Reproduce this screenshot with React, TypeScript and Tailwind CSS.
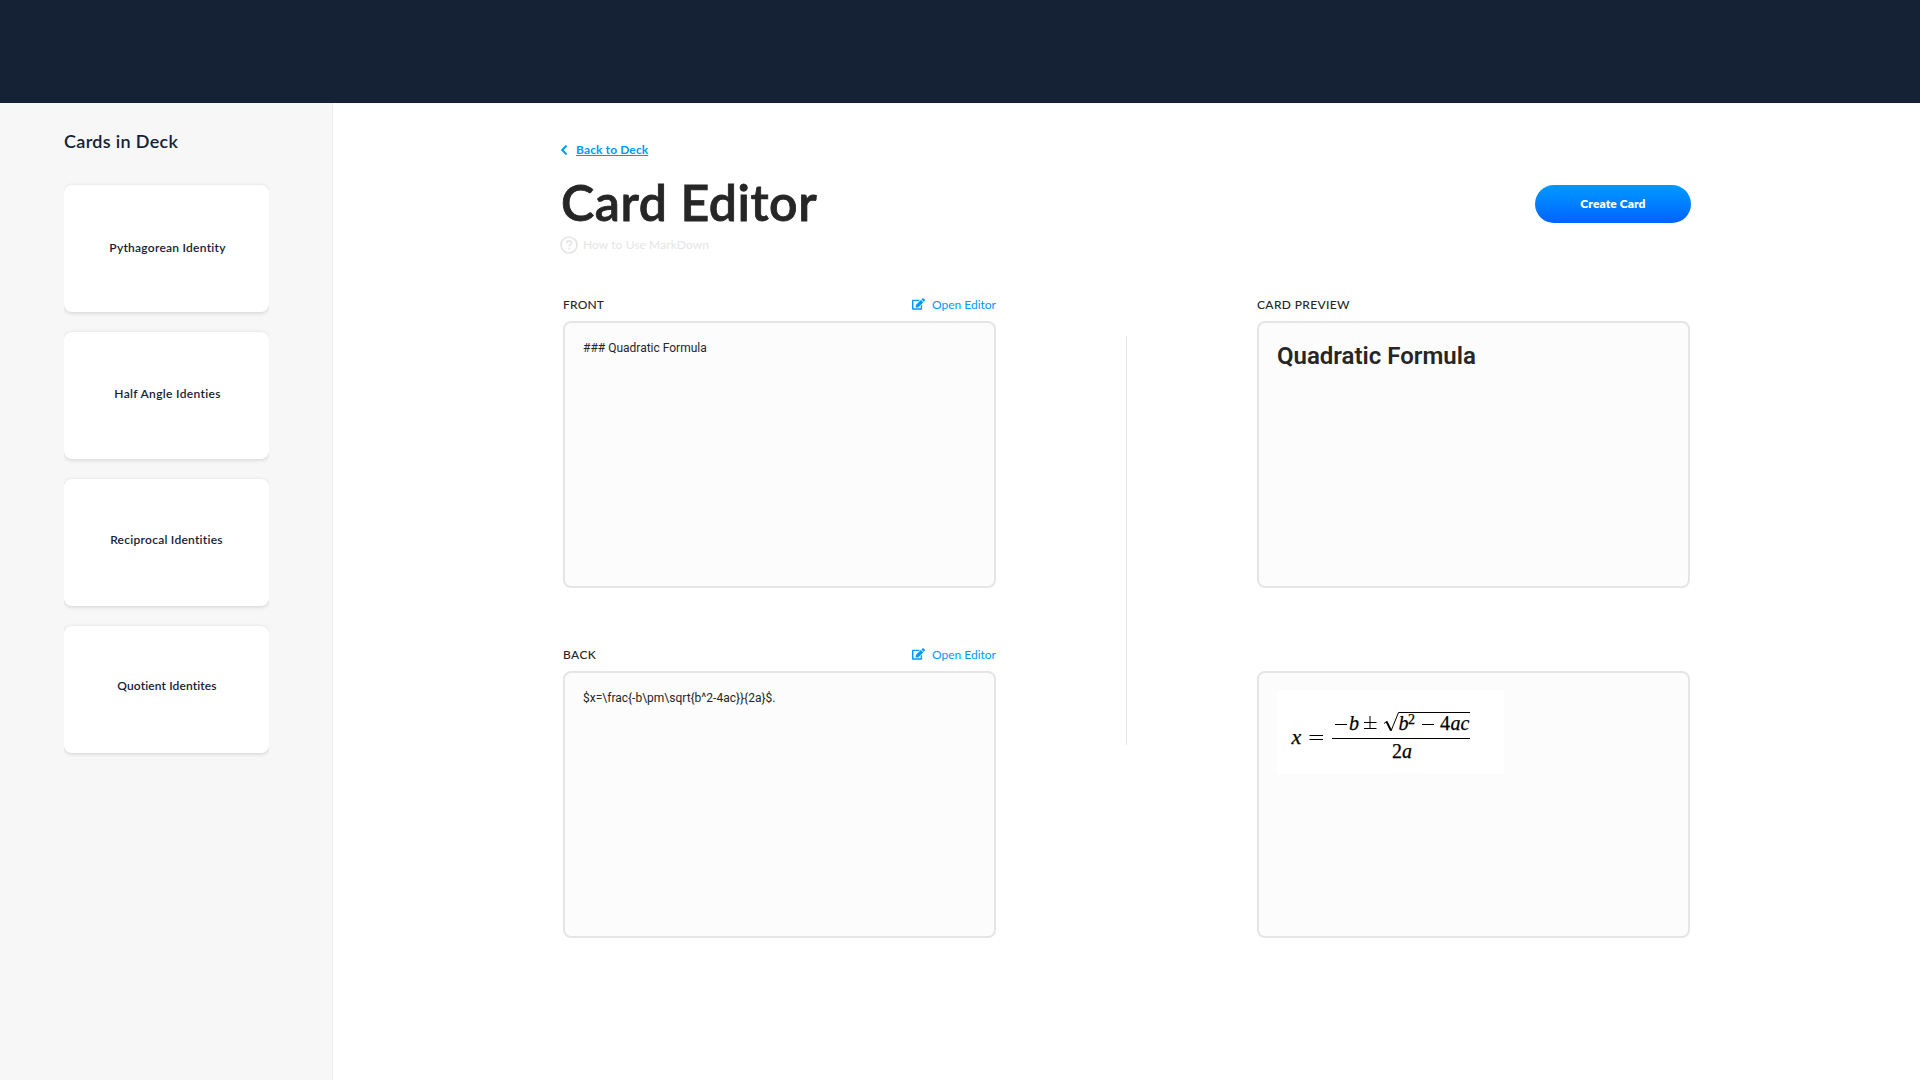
import React from "react";
import { FaEdit } from "react-icons/fa";

const deck = [
  { name: "Pythagorean Identity", cls: "tracking-[0.26px] pb-[1px] pl-[2px]" },
  { name: "Half Angle Identies", cls: "tracking-[0.33px] pb-[3px] pl-[2px]" },
  { name: "Reciprocal Identities", cls: "tracking-[0.26px] pb-[5px]" },
  { name: "Quotient Identites", cls: "tracking-[0.12px] pb-[7px] pl-[1px]" },
];

function Sidebar() {
  return (
    <aside className="w-[333px] shrink-0 border-r border-[#ececec] bg-[#f7f7f7] pl-16 pt-[26px]">
      <h2 className="h-[56px] text-[18px] font-semibold leading-6 tracking-[0.32px]">Cards in Deck</h2>
      <div className="flex flex-col gap-5">
        {deck.map((c) => (
          <div
            key={c.name}
            className={`flex h-[127px] w-[205px] items-center justify-center rounded-lg bg-white text-[12px] font-semibold shadow-[0_1px_4px_rgba(0,0,0,0.16)] [clip-path:inset(-6px_0_-6px_0)] ${c.cls}`}
          >
            {c.name}
          </div>
        ))}
      </div>
    </aside>
  );
}

function Panel({ children }: { children: React.ReactNode }) {
  return (
    <div className="h-[267px] w-[433px] rounded-lg border-2 border-[#e5e5e5] bg-[#fcfcfc] px-[18px] font-['Roboto',sans-serif]">
      {children}
    </div>
  );
}

function Label({ text, cls, editor }: { text: string; cls: string; editor?: boolean }) {
  return (
    <div className="flex h-[25px] w-[433px] items-start justify-between text-[12px] leading-[18px]">
      <span className={`font-medium ${cls}`}>{text}</span>
      {editor && (
        <a className="flex items-start text-[#0099ff]">
          <FaEdit className="mr-[7px] mt-[2px] h-[12px] w-[13px]" />
          Open Editor
        </a>
      )}
    </div>
  );
}

function Formula() {
  return (
    <svg width="227" height="83" viewBox="0 0 227 83" className="mt-[18px] block bg-white" fontFamily="Liberation Serif, serif" fontSize="20" stroke="#000" strokeWidth="0.25">
      <text x="14.5" y="52.5" fontStyle="italic" fontSize="22">x</text>
      <path d="M32.5 44.5H46M32.5 48.5H46" strokeWidth="1" />
      <path d="M55 47.5H193" strokeWidth="1.2" />
      <path d="M58 33.5H70" strokeWidth="1" />
      <text x="72" y="38.5" fontStyle="italic">b</text>
      <path d="M87 31.5H99.5M93 25V37.5M87 37.5H99.5" strokeWidth="1" />
      <path d="M107 32.5L109.5 30.5" fill="none" strokeWidth="1" />
      <path d="M109.5 30.5L114 39.5" fill="none" strokeWidth="1.9" />
      <path d="M114 40L121.5 21.5H193" fill="none" strokeWidth="1" />
      <text x="121.5" y="38.5" fontStyle="italic">b</text>
      <text x="131" y="33" fontSize="14">2</text>
      <path d="M145 33.5H157" strokeWidth="1" />
      <text x="163" y="38.5">4</text>
      <text x="173.5" y="38.5" fontStyle="italic">ac</text>
      <text x="115" y="66.5">2</text>
      <text x="125" y="66.5" fontStyle="italic">a</text>
    </svg>
  );
}

export default function App() {
  return (
    <div className="flex h-[1080px] w-[1920px] flex-col overflow-hidden bg-white font-['Lato',sans-serif] text-[#152235]">
      <header className="h-[103px] shrink-0 bg-[#152235]" />
      <div className="flex flex-1">
        <Sidebar />
        <main className="flex-1 pl-[228px] pt-[38px] text-[#262626]">
          <div className="flex h-[18px] items-center text-[12px] font-bold text-[#0099ff]">
            <svg width="7" height="10" viewBox="0 0 7 10" fill="none" stroke="#0099ff" strokeWidth="2" className="mr-[8px]">
              <path d="M5.6 0.6L1.2 5L5.6 9.4" />
            </svg>
            <a className="tracking-[0.12px] underline decoration-1 underline-offset-[1px]">Back to Deck</a>
          </div>
          <div className="flex h-[77px] w-[1130px] items-start justify-between">
            <h1 className="mt-[13px] text-[50px] font-semibold leading-[60px] tracking-[0.55px] [-webkit-text-stroke:0.8px_#262626]">Card Editor</h1>
            <button className="mt-[26px] h-[38px] w-[156px] rounded-full bg-linear-to-b from-[#0099ff] to-[#0062ff] text-[12px] font-extrabold tracking-[0.1px] text-white">
              Create Card
            </button>
          </div>
          <div className="flex h-[18px] items-center text-[12px] text-[#e5e5e5]">
            <svg width="18" height="18" viewBox="0 0 18 18" fill="none" stroke="#e5e5e5" strokeWidth="1.7" className="-ml-[1px] mr-[5px]">
              <circle cx="9" cy="9" r="8" />
              <path d="M6.6 7.2C6.6 5.7 7.7 4.9 9 4.9C10.3 4.9 11.4 5.7 11.4 7C11.4 8.7 9 8.6 9 10.6" />
              <path d="M9 11.8V13.5" />
            </svg>
            <span className="tracking-[0.08px]">How to Use MarkDown</span>
          </div>
          <div className="mt-[42px] flex pl-[2px]">
            <section>
              <Label text="FRONT" cls="tracking-[0.2px]" editor />
              <Panel>
                <p className="pt-[16px] text-[12px] leading-[18px]">### Quadratic Formula</p>
              </Panel>
              <div className="h-[58px]" />
              <Label text="BACK" cls="tracking-[0.4px]" editor />
              <Panel>
                <p className="pt-[16px] text-[12px] leading-[18px]">{"$x=\\frac{-b\\pm\\sqrt{b^2-4ac}}{2a}$."}</p>
              </Panel>
            </section>
            <div className="ml-[130px] mr-[130px] mt-[40px] h-[409px] w-px bg-[#e5e5e5]" />
            <section>
              <Label text="CARD PREVIEW" cls="tracking-[0.35px]" />
              <Panel>
                <h3 className="pt-[19px] text-[24px] font-semibold leading-[28px]">Quadratic Formula</h3>
              </Panel>
              <div className="h-[83px]" />
              <Panel>
                <Formula />
              </Panel>
            </section>
          </div>
        </main>
      </div>
    </div>
  );
}
